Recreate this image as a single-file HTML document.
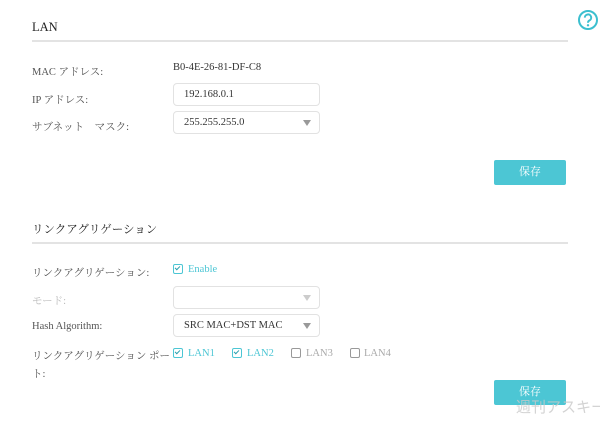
<!DOCTYPE html><html><head><meta charset="utf-8"><style>
body{margin:0;width:600px;height:424px;background:#fff;position:relative;overflow:hidden;font-family:"Liberation Serif","Noto Serif CJK SC",serif;color:#333}
.a{position:absolute;white-space:nowrap}
.l{font-size:10.5px;color:#555}
.line{position:absolute;left:32px;width:536px;height:2px;background:#e3e3e3}
.box{position:absolute;left:173px;width:145px;height:21px;border:1px solid #e2e2e2;border-radius:4px;font-size:10.5px;color:#333;line-height:21px;text-indent:10px}
.tri{position:absolute;right:8px;top:8px;width:0;height:0;border-left:4px solid transparent;border-right:4px solid transparent;border-top:6px solid #999}
.btn{position:absolute;left:494px;width:72px;height:25px;background:#4cc6d4;border-radius:2px;color:#fff;font-size:11px;text-align:center;line-height:25px}
.cb{position:absolute;width:8px;height:8px;border:1px solid #999;border-radius:2px}
.cb.on{border-color:#4cc6d4}
.cb.on:after{content:"";position:absolute;left:2px;top:0px;width:2px;height:4px;border:solid #2a9fae;border-width:0 1.5px 1.5px 0;transform:rotate(45deg)}
.t{font-size:10.5px}
</style></head><body>
<div class="a" style="left:32px;top:20px;font-size:12.5px;color:#222">LAN</div>
<svg class="a" style="left:577px;top:9px" width="22" height="22" viewBox="0 0 22 22"><circle cx="11" cy="11" r="9" fill="none" stroke="#3cbfcf" stroke-width="2"/><path d="M7.8 8.6a3.2 3.2 0 1 1 4.4 3c-1 .5-1.2 1-1.2 2.2" fill="none" stroke="#3cbfcf" stroke-width="2"/><circle cx="11" cy="16.3" r="1.2" fill="#3cbfcf"/></svg>
<div class="line" style="top:40px"></div>
<div class="a l" style="left:32px;top:64px">MAC アドレス:</div>
<div class="a t" style="left:173px;top:62px">B0-4E-26-81-DF-C8</div>
<div class="a l" style="left:32px;top:92px">IP アドレス:</div>
<div class="box" style="top:83px">192.168.0.1</div>
<div class="a l" style="left:32px;top:119px">サブネット　マスク:</div>
<div class="box" style="top:111px">255.255.255.0<div class="tri"></div></div>
<div class="btn" style="top:160px">保存</div>
<div class="a" style="left:32px;top:221px;font-size:11.5px;color:#222">リンクアグリゲーション</div>
<div class="line" style="top:242px"></div>
<div class="a l" style="left:32px;top:265px">リンクアグリゲーション:</div>
<div class="cb on" style="left:173px;top:264px"></div>
<div class="a t" style="left:188px;top:264px;color:#4cc6d4">Enable</div>
<div class="a l" style="left:32px;top:293px;color:#bbb">モード:</div>
<div class="box" style="top:286px"><div class="tri" style="border-top-color:#ccc"></div></div>
<div class="a l" style="left:32px;top:321px">Hash Algorithm:</div>
<div class="box" style="top:314px">SRC MAC+DST MAC<div class="tri"></div></div>
<div class="a l" style="left:32px;top:348px">リンクアグリゲーション ポー</div>
<div class="a l" style="left:32px;top:366px">ト:</div>
<div class="cb on" style="left:173px;top:348px"></div><div class="a t" style="left:188px;top:348px;color:#4cc6d4">LAN1</div>
<div class="cb on" style="left:232px;top:348px"></div><div class="a t" style="left:247px;top:348px;color:#4cc6d4">LAN2</div>
<div class="cb" style="left:291px;top:348px"></div><div class="a t" style="left:306px;top:348px;color:#aaa">LAN3</div>
<div class="cb" style="left:350px;top:348px"></div><div class="a t" style="left:364px;top:348px;color:#aaa">LAN4</div>
<div class="btn" style="top:380px">保存</div>
<div class="a" style="left:516px;top:396px;font-size:15px;color:rgba(200,200,200,0.8);font-family:'Noto Sans CJK JP',sans-serif">週刊アスキー</div>
</body></html>
